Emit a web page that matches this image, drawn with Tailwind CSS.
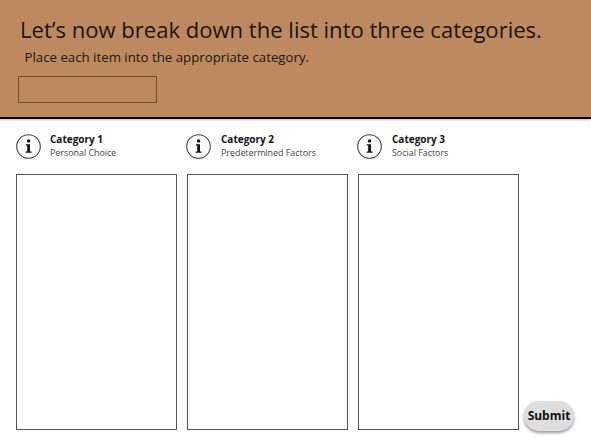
<!DOCTYPE html>
<html lang="en">
<head>
  <meta charset="UTF-8" />
  <title>Categories</title>
  <script src="https://cdn.jsdelivr.net/npm/@tailwindcss/browser@4"></script>
</head>
<body class="bg-white font-['Open_Sans',sans-serif] text-[#111] h-[441px] w-[591px] overflow-hidden">
  <header class="h-[119px] bg-[#bd8a60] border-b-[2px] border-black pl-[20px] pt-[14px] shadow-[0_1px_2px_rgba(0,0,0,0.25)]">
    <h1 class="text-[22.05px] leading-[30px] text-[#1c130d] whitespace-nowrap">Let’s now break down the list into three categories.</h1>
    <p class="text-[13.25px] leading-[20px] mt-[3px] ml-[4.5px] text-[#21170f]">Place each item into the appropriate category.</p>
    <div class="w-[139px] h-[27px] -ml-[2px] mt-[9px] border border-[#6b4f37]"></div>
  </header>

  <main class="flex pl-[16px] pt-[14px]">
    <div class="flex gap-[10px]">
      <section class="w-[161px]">
        <div class="flex items-center h-[27px] gap-[9px]">
          <svg class="w-[25px] h-[25px]" viewBox="0 0 25 25" fill="none">
            <circle cx="12.5" cy="12.5" r="11.8" stroke="#444" stroke-width="1.1"/>
            <circle cx="12.6" cy="7" r="1.7" fill="#111"/>
            <path d="M9.8 10.3h4.2v7.1h1.6v1.3H9.6v-1.3h1.6v-5.8H9.8z" fill="#111"/>
          </svg>
          <div class="-mt-[3px]">
            <div class="text-[10px] leading-[14px] font-bold">Category 1</div>
            <div class="text-[8.9px] leading-[13px] text-[#444]">Personal Choice</div>
          </div>
        </div>
        <div class="h-[256px] mt-[14px] border border-[#555]"></div>
      </section>

      <section class="w-[161px]">
        <div class="flex items-center h-[27px] gap-[10px] -ml-[1px]">
          <svg class="w-[25px] h-[25px]" viewBox="0 0 25 25" fill="none">
            <circle cx="12.5" cy="12.5" r="11.8" stroke="#444" stroke-width="1.1"/>
            <circle cx="12.6" cy="7" r="1.7" fill="#111"/>
            <path d="M9.8 10.3h4.2v7.1h1.6v1.3H9.6v-1.3h1.6v-5.8H9.8z" fill="#111"/>
          </svg>
          <div class="-mt-[3px]">
            <div class="text-[10px] leading-[14px] font-bold">Category 2</div>
            <div class="text-[8.9px] leading-[13px] text-[#444]">Predetermined Factors</div>
          </div>
        </div>
        <div class="h-[256px] mt-[14px] border border-[#555]"></div>
      </section>

      <section class="w-[161px]">
        <div class="flex items-center h-[27px] gap-[10px] -ml-[1px]">
          <svg class="w-[25px] h-[25px]" viewBox="0 0 25 25" fill="none">
            <circle cx="12.5" cy="12.5" r="11.8" stroke="#444" stroke-width="1.1"/>
            <circle cx="12.6" cy="7" r="1.7" fill="#111"/>
            <path d="M9.8 10.3h4.2v7.1h1.6v1.3H9.6v-1.3h1.6v-5.8H9.8z" fill="#111"/>
          </svg>
          <div class="-mt-[3px]">
            <div class="text-[10px] leading-[14px] font-bold">Category 3</div>
            <div class="text-[8.9px] leading-[13px] text-[#444]">Social Factors</div>
          </div>
        </div>
        <div class="h-[256px] mt-[14px] border border-[#555]"></div>
      </section>
    </div>

    <button class="self-end ml-[5px] -mb-[1px] w-[50px] h-[30px] rounded-[15px] bg-[#dedede] text-[12px] font-bold text-[#111] shadow-[0_2px_3px_rgba(0,0,0,0.4)]">Submit</button>
  </main>
</body>
</html>
